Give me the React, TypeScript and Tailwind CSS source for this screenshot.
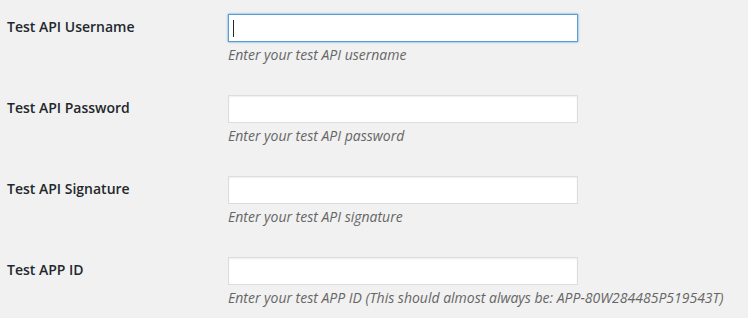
import React from 'react';

interface Field {
  label: string;
  help: string;
  focused?: boolean;
}

const FIELDS: Field[] = [
  { label: 'Test API Username', help: 'Enter your test API username', focused: true },
  { label: 'Test API Password', help: 'Enter your test API password' },
  { label: 'Test API Signature', help: 'Enter your test API signature' },
  { label: 'Test APP ID', help: 'Enter your test APP ID (This should almost always be: APP-80W284485P519543T)' },
];

const App: React.FC = () => {
  return (
    <div className="min-h-[318px] w-full bg-[#f1f1f1] pl-[7px]" style={{ fontFamily: '"Open Sans", "Liberation Sans", sans-serif' }}>
      {FIELDS.map(f => (
        <div key={f.label} className="flex h-[81px]">
          <div className="w-[221px] shrink-0 pt-[18px] text-[14px] font-semibold leading-[18px] text-[#23282d]">{f.label}</div>
          <div className="pt-[14px]">
            {f.focused ? (
              <div className="flex h-[28px] w-[350px] items-center border border-[#5b9dd9] bg-white pl-[4px] shadow-[0_0_2px_rgba(30,140,190,0.8)]">
                <span className="h-[17px] w-px bg-[#23282d]" />
              </div>
            ) : (
              <input type="text" className="block h-[28px] w-[350px] border border-[#dddddd] bg-white shadow-[inset_0_1px_2px_rgba(0,0,0,0.07)] outline-none" />
            )}
            <p className="mt-[3px] text-[14px] italic leading-[20px] text-[#666666] whitespace-nowrap">{f.help}</p>
          </div>
        </div>
      ))}
    </div>
  );
};

export default App;
